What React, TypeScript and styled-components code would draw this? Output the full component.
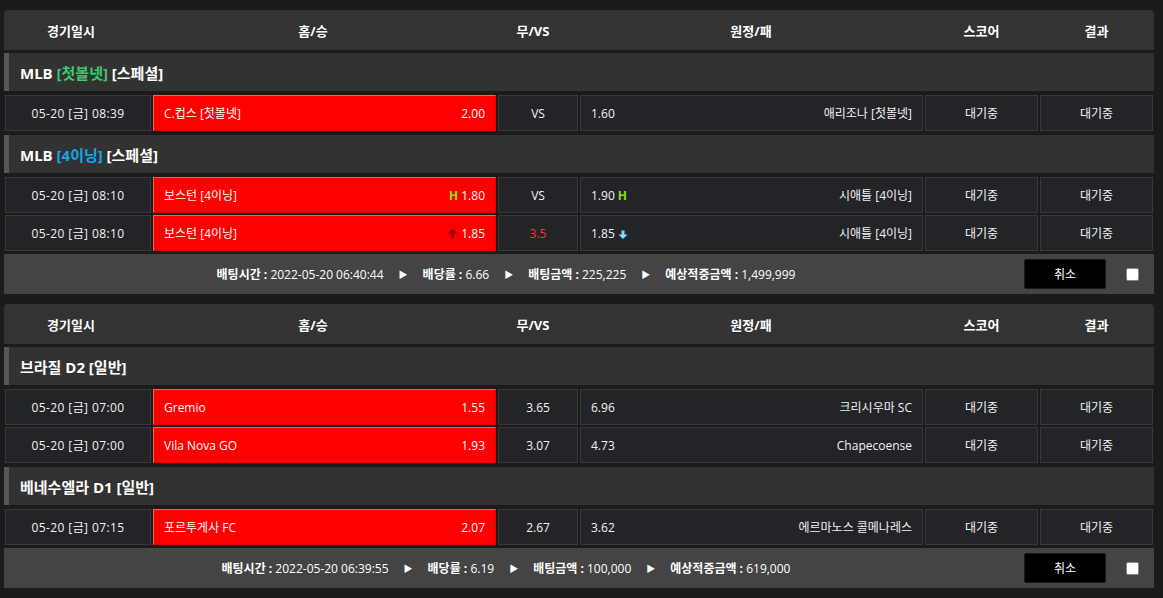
import React from 'react'
import styled, { createGlobalStyle } from 'styled-components'

const GlobalStyle = createGlobalStyle`
  body {
    margin: 0;
    background: #1b1b1b;
    font-family: "Open Sans", "Noto Sans CJK KR", sans-serif;
    color: #fff;
  }
`

const Page = styled.div`
  padding: 10px 9px 10px 4px;
  display: flex;
  flex-direction: column;
  gap: 10px;
`

const Section = styled.div`
  display: flex;
  flex-direction: column;
`

const HeadRow = styled.div`
  display: grid;
  grid-template-columns: 134px 350px 90px 346px 115px 115px;
  height: 40px;
  background: #333;
  border-radius: 4px 4px 0 0;
  align-items: center;
  text-align: center;
  font-size: 13px;
  font-weight: 700;
`

const League = styled.div<{ $top: number }>`
  margin-top: ${p => p.$top}px;
  height: 38px;
  background: #323232;
  border-left: 5px solid #575757;
  padding-left: 11px;
  display: flex;
  align-items: center;
  font-size: 15px;
  font-weight: 700;
  .green { color: #3cc96b; }
  .blue { color: #16a7e6; }
`

const Rows = styled.div`
  margin-top: 4px;
  display: flex;
  flex-direction: column;
  gap: 2px;
`

const MatchRow = styled.div`
  display: grid;
  grid-template-columns: 146px 343px 80px 343px 113px 113px;
  gap: 2px;
  padding-left: 1px;
  height: 36px;
  font-size: 12px;
`

const Cell = styled.div<{ $align?: 'left' | 'center' | 'between' }>`
  box-sizing: border-box;
  background: #232427;
  border: 1px solid #38393c;
  display: flex;
  align-items: center;
  justify-content: ${p => (p.$align === 'between' ? 'space-between' : p.$align === 'left' ? 'flex-start' : 'center')};
  padding: 0 10px;
  color: #f2f2f2;
`

const DateCell = styled(Cell)`
  letter-spacing: 0.4px;
`

const HomeCell = styled(Cell)`
  background: #ff0000;
  border-color: #ff5c5c #e60000 #e60000 #ff5c5c;
  color: #fff;
`

const Odds = styled.span`
  display: inline-flex;
  align-items: center;
  gap: 3px;
`

const Handicap = styled.span`
  color: #ec3b32;
`

const HMark = styled.b`
  color: #7fe31c;
  font-size: 12px;
`

const Bar = styled.div`
  margin-top: 3px;
  height: 40px;
  background: #444;
  display: flex;
  align-items: center;
  padding-right: 15px;
`

const Summary = styled.div`
  flex: 1;
  display: flex;
  justify-content: center;
  align-items: center;
  gap: 10px;
  font-size: 12px;
  b { font-weight: 700; }
`

const Tri = styled.span`
  font-size: 9px;
  margin: 0 5px;
`

const CancelButton = styled.button`
  margin-left: 16px;
  width: 82px;
  height: 30px;
  background: #000;
  border: 1px solid #1a1a1a;
  border-radius: 2px;
  color: #fff;
  font-family: inherit;
  font-size: 12px;
`

const Check = styled.span`
  margin-left: 20px;
  width: 11px;
  height: 11px;
  background: #fff;
  border: 1px solid #888;
  border-radius: 2px;
`

const UpArrow = () => (
  <svg width="11" height="11" viewBox="0 0 10 10">
    <path d="M5 0.5 L9.5 5 H6.5 V9.5 H3.5 V5 H0.5 Z" fill="#a30000" />
  </svg>
)

const DownArrow = () => (
  <svg width="10" height="10" viewBox="0 0 10 10" style={{ marginTop: 3 }}>
    <path d="M3.5 0.5 H6.5 V4.5 H9.5 L5 9 L0.5 4.5 H3.5 Z" fill="#7fdcff" />
  </svg>
)

type Match = {
  date: string
  home: string
  homeOdds: string
  homeMark?: 'H' | 'up'
  mid: string
  midRed?: boolean
  awayOdds: string
  awayMark?: 'H' | 'down'
  away: string
}

type Group = { league: React.ReactNode; matches: Match[] }

type Ticket = {
  groups: Group[]
  time: string
  rate: string
  amount: string
  expected: string
}

const tickets: Ticket[] = [
  {
    groups: [
      {
        league: <span>MLB <span className="green">[첫볼넷]</span> [스페셜]</span>,
        matches: [
          { date: '05-20 [금] 08:39', home: 'C.컵스 [첫볼넷]', homeOdds: '2.00', mid: 'VS', awayOdds: '1.60', away: '애리조나 [첫볼넷]' },
        ],
      },
      {
        league: <span>MLB <span className="blue">[4이닝]</span> [스페셜]</span>,
        matches: [
          { date: '05-20 [금] 08:10', home: '보스턴 [4이닝]', homeOdds: '1.80', homeMark: 'H', mid: 'VS', awayOdds: '1.90', awayMark: 'H', away: '시애틀 [4이닝]' },
          { date: '05-20 [금] 08:10', home: '보스턴 [4이닝]', homeOdds: '1.85', homeMark: 'up', mid: '3.5', midRed: true, awayOdds: '1.85', awayMark: 'down', away: '시애틀 [4이닝]' },
        ],
      },
    ],
    time: '2022-05-20 06:40:44',
    rate: '6.66',
    amount: '225,225',
    expected: '1,499,999',
  },
  {
    groups: [
      {
        league: <span>브라질 D2 [일반]</span>,
        matches: [
          { date: '05-20 [금] 07:00', home: 'Gremio', homeOdds: '1.55', mid: '3.65', awayOdds: '6.96', away: '크리시우마 SC' },
          { date: '05-20 [금] 07:00', home: 'Vila Nova GO', homeOdds: '1.93', mid: '3.07', awayOdds: '4.73', away: 'Chapecoense' },
        ],
      },
      {
        league: <span>베네수엘라 D1 [일반]</span>,
        matches: [
          { date: '05-20 [금] 07:15', home: '포르투게사 FC', homeOdds: '2.07', mid: '2.67', awayOdds: '3.62', away: '에르마노스 콜메나레스' },
        ],
      },
    ],
    time: '2022-05-20 06:39:55',
    rate: '6.19',
    amount: '100,000',
    expected: '619,000',
  },
]

const MatchLine = ({ m }: { m: Match }) => (
  <MatchRow>
    <DateCell>{m.date}</DateCell>
    <HomeCell $align="between">
      <span>{m.home}</span>
      <Odds>
        {m.homeMark === 'H' && <HMark>H</HMark>}
        {m.homeMark === 'up' && <UpArrow />}
        {m.homeOdds}
      </Odds>
    </HomeCell>
    <Cell>{m.midRed ? <Handicap>{m.mid}</Handicap> : m.mid}</Cell>
    <Cell $align="between">
      <Odds>
        {m.awayOdds}
        {m.awayMark === 'H' && <HMark>H</HMark>}
        {m.awayMark === 'down' && <DownArrow />}
      </Odds>
      <span>{m.away}</span>
    </Cell>
    <Cell>대기중</Cell>
    <Cell>대기중</Cell>
  </MatchRow>
)

const TicketTable = ({ t }: { t: Ticket }) => (
  <Section>
    <HeadRow>
      <div>경기일시</div>
      <div>홈/승</div>
      <div>무/VS</div>
      <div>원정/패</div>
      <div>스코어</div>
      <div>결과</div>
    </HeadRow>
    {t.groups.map((g, i) => (
      <React.Fragment key={i}>
        <League $top={i === 0 ? 3 : 4}>{g.league}</League>
        <Rows>
          {g.matches.map((m, j) => (
            <MatchLine key={j} m={m} />
          ))}
        </Rows>
      </React.Fragment>
    ))}
    <Bar>
      <Summary>
        <span><b>배팅시간 :</b> {t.time}</span>
        <Tri>▶</Tri>
        <span><b>배당률 :</b> {t.rate}</span>
        <Tri>▶</Tri>
        <span><b>배팅금액 :</b> {t.amount}</span>
        <Tri>▶</Tri>
        <span><b>예상적중금액 :</b> {t.expected}</span>
      </Summary>
      <CancelButton>취소</CancelButton>
      <Check />
    </Bar>
  </Section>
)

const App = () => (
  <>
    <GlobalStyle />
    <Page>
      {tickets.map((t, i) => (
        <TicketTable key={i} t={t} />
      ))}
    </Page>
  </>
)

export default App
